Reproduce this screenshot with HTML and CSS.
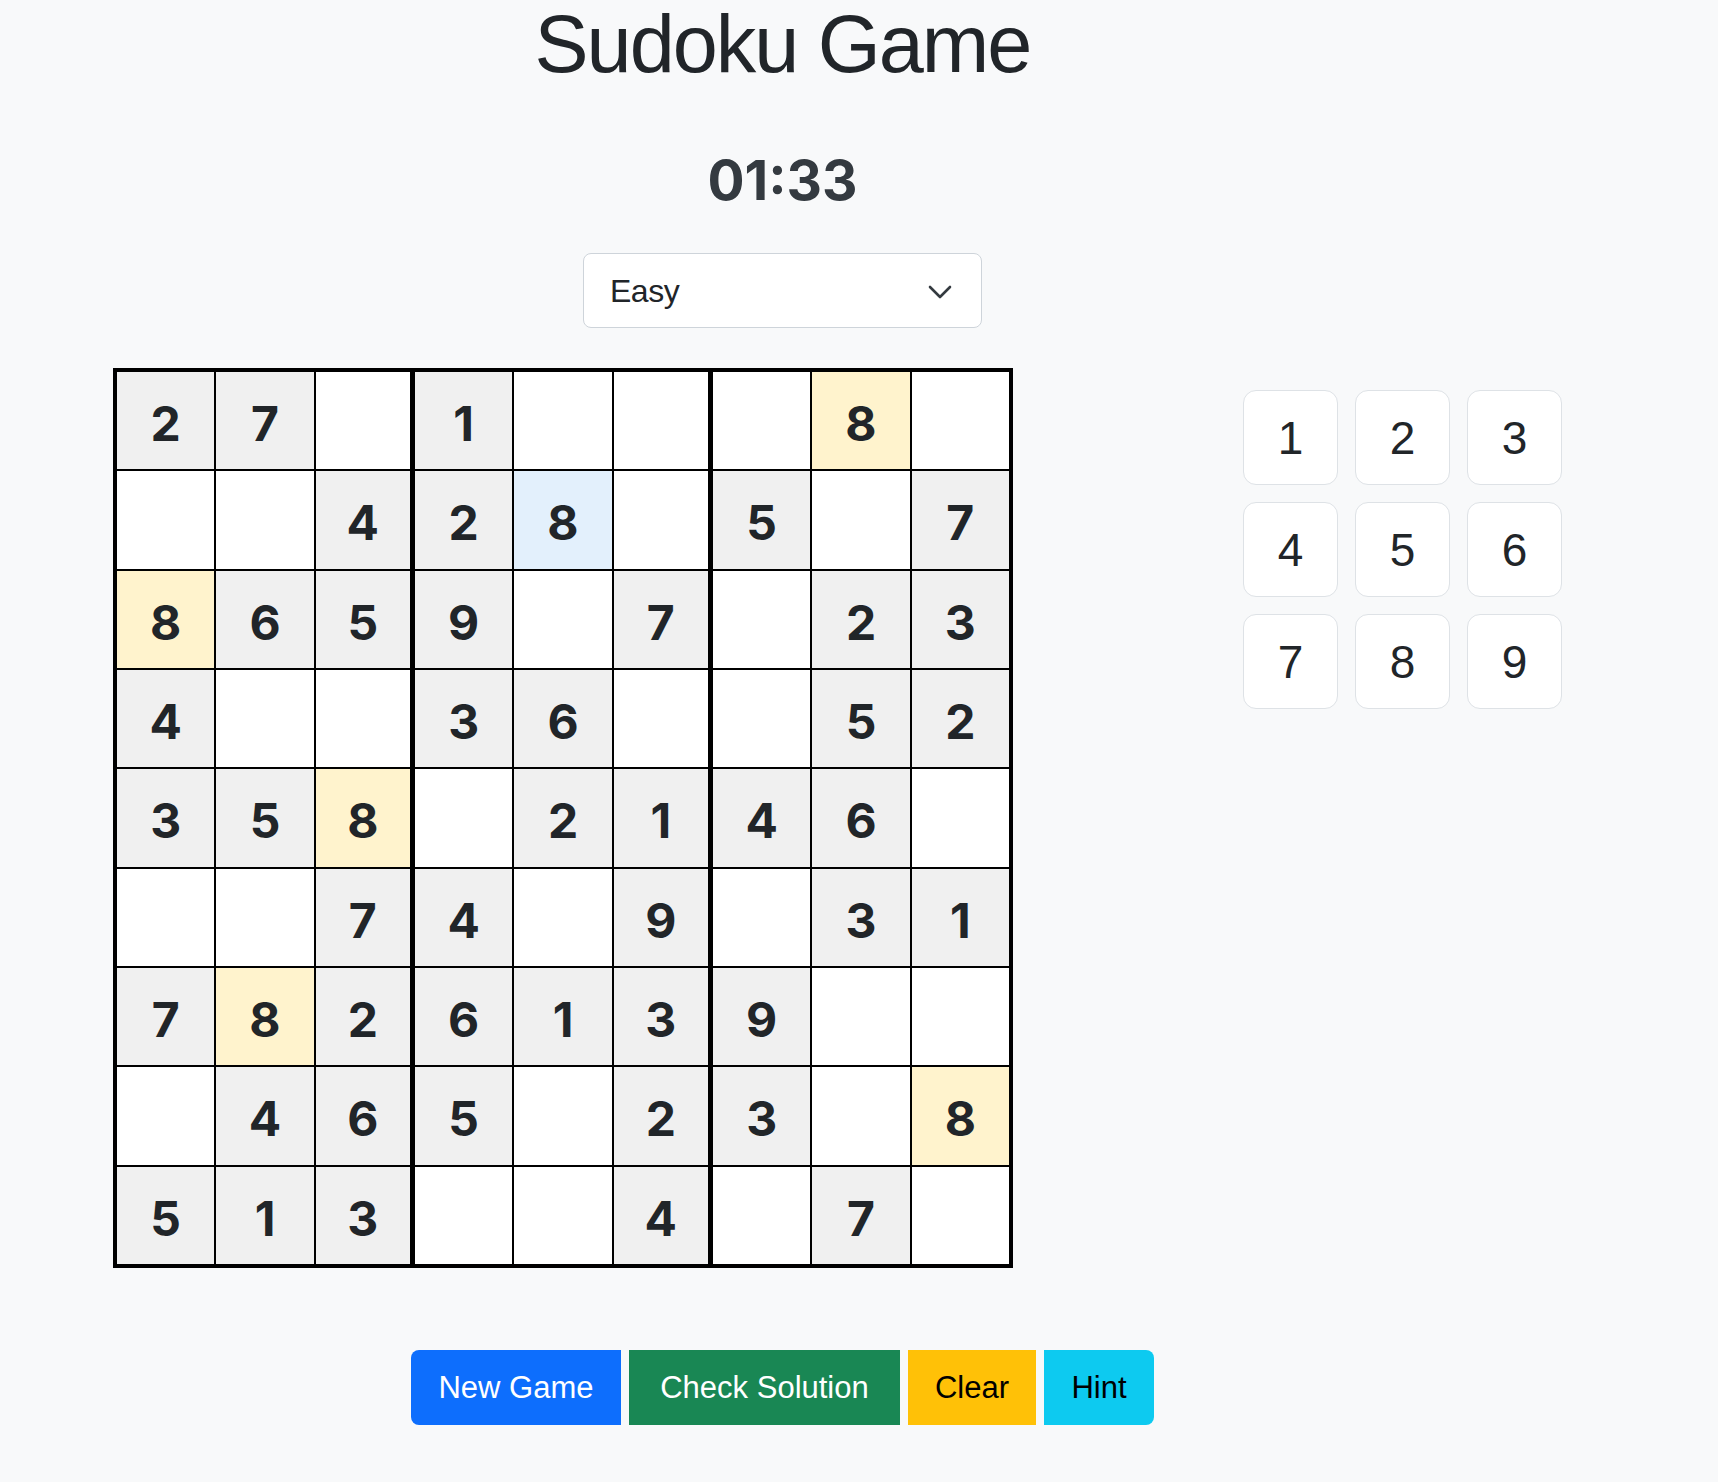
FILE: index.html
```html
<!DOCTYPE html>
<html lang="en">
<head>
<meta charset="utf-8">
<title>Sudoku Game</title>
<link rel="stylesheet" href="styles.css">
</head>
<body>
<main class="page">
  <h1 class="title">Sudoku Game</h1>
  <div class="timer">01:33</div>
  <div class="select">
    <span class="select-text">Easy</span>
    <svg class="chev" width="24" height="14" viewBox="0 0 24 14" aria-hidden="true"><path d="M2 2l10 10 10-10" fill="none" stroke="#343a40" stroke-width="2.6" stroke-linecap="round" stroke-linejoin="round"/></svg>
  </div>

  <div class="board-row">
    <div class="board">
      <div class="cell given">2</div><div class="cell given">7</div><div class="cell"></div><div class="cell given">1</div><div class="cell"></div><div class="cell"></div><div class="cell"></div><div class="cell given hl">8</div><div class="cell"></div>
      <div class="cell"></div><div class="cell"></div><div class="cell given">4</div><div class="cell given">2</div><div class="cell sel">8</div><div class="cell"></div><div class="cell given">5</div><div class="cell"></div><div class="cell given">7</div>
      <div class="cell given hl">8</div><div class="cell given">6</div><div class="cell given">5</div><div class="cell given">9</div><div class="cell"></div><div class="cell given">7</div><div class="cell"></div><div class="cell given">2</div><div class="cell given">3</div>
      <div class="cell given">4</div><div class="cell"></div><div class="cell"></div><div class="cell given">3</div><div class="cell given">6</div><div class="cell"></div><div class="cell"></div><div class="cell given">5</div><div class="cell given">2</div>
      <div class="cell given">3</div><div class="cell given">5</div><div class="cell given hl">8</div><div class="cell"></div><div class="cell given">2</div><div class="cell given">1</div><div class="cell given">4</div><div class="cell given">6</div><div class="cell"></div>
      <div class="cell"></div><div class="cell"></div><div class="cell given">7</div><div class="cell given">4</div><div class="cell"></div><div class="cell given">9</div><div class="cell"></div><div class="cell given">3</div><div class="cell given">1</div>
      <div class="cell given">7</div><div class="cell given hl">8</div><div class="cell given">2</div><div class="cell given">6</div><div class="cell given">1</div><div class="cell given">3</div><div class="cell given">9</div><div class="cell"></div><div class="cell"></div>
      <div class="cell"></div><div class="cell given">4</div><div class="cell given">6</div><div class="cell given">5</div><div class="cell"></div><div class="cell given">2</div><div class="cell given">3</div><div class="cell"></div><div class="cell given hl">8</div>
      <div class="cell given">5</div><div class="cell given">1</div><div class="cell given">3</div><div class="cell"></div><div class="cell"></div><div class="cell given">4</div><div class="cell"></div><div class="cell given">7</div><div class="cell"></div>
    </div>

    <div class="numpad">
      <button class="num">1</button><button class="num">2</button><button class="num">3</button>
      <button class="num">4</button><button class="num">5</button><button class="num">6</button>
      <button class="num">7</button><button class="num">8</button><button class="num">9</button>
    </div>
  </div>

  <div class="actions">
    <button class="btn btn-primary btn-new">New Game</button>
    <button class="btn btn-success btn-check">Check Solution</button>
    <button class="btn btn-warning btn-clear">Clear</button>
    <button class="btn btn-info btn-hint">Hint</button>
  </div>
</main>
</body>
</html>
```

FILE: styles.css
```css
* { box-sizing: border-box; }

html, body {
  margin: 0;
  padding: 0;
  background: #f8f9fa;
  color: #212529;
  font-family: "Liberation Sans", Arial, sans-serif;
}

.page {
  width: 1565px;
  display: flex;
  flex-direction: column;
  align-items: center;
}

.title {
  margin: 4px 0 0;
  font-size: 81px;
  line-height: 81px;
  font-weight: 400;
  letter-spacing: -2px;
  color: #212529;
}

.timer {
  margin-top: 68px;
  font-family: Inter, "Noto Sans", sans-serif;
  font-weight: 700;
  font-size: 55px;
  line-height: 55px;
  color: #343a40;
}

.select {
  margin-top: 45px;
  width: 399px;
  height: 75px;
  background: #fff;
  border: 1px solid #ced4da;
  border-radius: 8px;
  display: flex;
  align-items: center;
  justify-content: space-between;
  padding: 2px 29px 0 26px;
}

.select-text {
  font-size: 32px;
  letter-spacing: -0.5px;
  color: #212529;
}

.chev { display: block; }

.board-row {
  margin-top: 40px;
  align-self: stretch;
  display: flex;
  align-items: flex-start;
  padding-left: 113px;
  gap: 230px;
}

.board {
  width: 900px;
  height: 900px;
  border: 3px solid #000;
  display: grid;
  grid-template-columns: repeat(9, 1fr);
  grid-template-rows: repeat(9, 1fr);
  background: #fff;
}

.cell {
  border: 1px solid #000;
  background: #fff;
  display: flex;
  align-items: center;
  justify-content: center;
  padding-top: 6px;
  font-family: Inter, "Noto Sans", sans-serif;
  font-weight: 700;
  font-size: 48px;
  color: #212529;
}

.cell:nth-child(9n+3),
.cell:nth-child(9n+6) {
  border-right-width: 4px;
}

.cell.given { background: #f0f0f0; }
.cell.hl { background: #fff3cd; }
.cell.sel { background: #e3f0fc; }

.numpad {
  margin-top: 22px;
  display: grid;
  grid-template-columns: repeat(3, 95px);
  grid-auto-rows: 95px;
  gap: 17px;
}

.num {
  background: #fff;
  border: 1px solid #dee2e6;
  border-radius: 13px;
  font-family: "Liberation Sans", Arial, sans-serif;
  font-size: 46px;
  color: #212529;
  padding: 0;
  display: flex;
  align-items: center;
  justify-content: center;
}

.actions {
  margin-top: 82px;
  display: flex;
  gap: 8px;
}

.btn {
  height: 75px;
  border: none;
  padding: 0;
  font-family: "Liberation Sans", Arial, sans-serif;
  font-size: 31px;
  border-radius: 0;
  text-align: center;
}

.btn-new { width: 210px; }
.btn-check { width: 271px; }
.btn-clear { width: 128px; }
.btn-hint { width: 110px; }

.btn:first-child { border-radius: 8px 0 0 8px; }
.btn:last-child { border-radius: 0 8px 8px 0; }

.btn-primary { background: #0d6efd; color: #fff; }
.btn-success { background: #198754; color: #fff; }
.btn-warning { background: #ffc107; color: #000; }
.btn-info { background: #0dcaf0; color: #000; }
```
